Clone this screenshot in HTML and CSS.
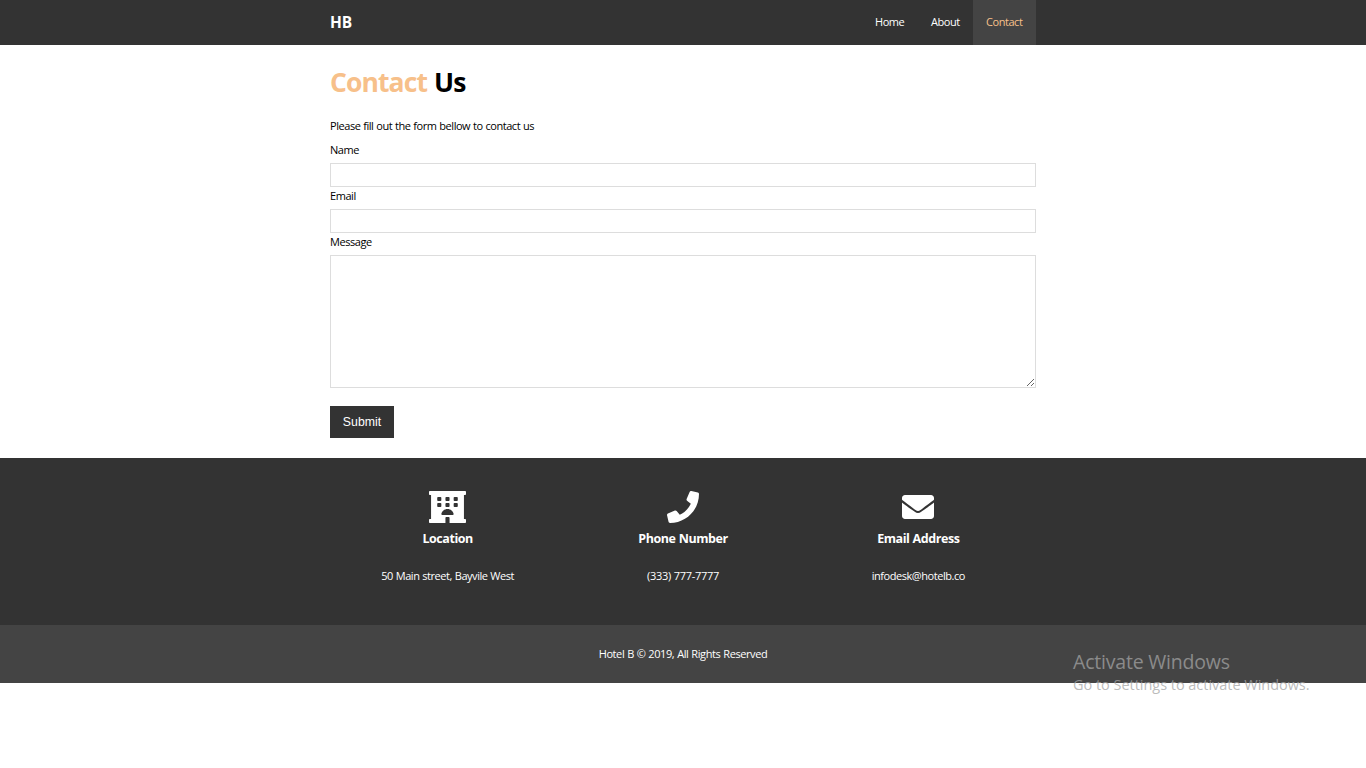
FILE: index.html
```html
<!DOCTYPE html>
<html lang="en">
<head>
<meta charset="utf-8">
<title>HB | Contact</title>
<link rel="stylesheet" href="styles.css">
</head>
<body>
<nav class="navbar">
  <div class="container nav-inner">
    <h1 class="logo">HB</h1>
    <ul class="menu">
      <li><a class="home" href="#">Home</a></li>
      <li><a class="about" href="#">About</a></li>
      <li><a class="current" href="#">Contact</a></li>
    </ul>
  </div>
</nav>
<section class="container contact">
  <h1 class="title"><span class="accent">Contact</span> Us</h1>
  <p class="intro">Please fill out the form bellow to contact us</p>
  <form>
    <div class="group"><label for="name">Name</label><input id="name" type="text"></div>
    <div class="group"><label for="email">Email</label><input id="email" type="text"></div>
    <div class="group"><label for="message">Message</label><textarea id="message"></textarea></div>
    <button class="btn" type="button">Submit</button>
  </form>
</section>
<section class="info">
  <div class="container columns">
    <div class="box">
      <svg class="hotel" viewBox="0 0 576 512" preserveAspectRatio="none"><path fill="currentColor" fill-rule="evenodd" d="M560 64c8.8 0 16-7.2 16-16V16c0-8.8-7.2-16-16-16H16C7.2 0 0 7.2 0 16v32c0 8.8 7.2 16 16 16h16v384H16c-8.8 0-16 7.2-16 16v32c0 8.8 7.2 16 16 16h240v-80c0-8.8 7.2-16 16-16h32c8.8 0 16 7.2 16 16v80h240c8.8 0 16-7.2 16-16v-32c0-8.8-7.2-16-16-16h-16V64zM141 96h38q13 0 13 13v38q0 13-13 13h-38q-13 0-13-13v-38q0-13 13-13zM269 96h38q13 0 13 13v38q0 13-13 13h-38q-13 0-13-13v-38q0-13 13-13zM397 96h38q13 0 13 13v38q0 13-13 13h-38q-13 0-13-13v-38q0-13 13-13zM141 192h38q13 0 13 13v38q0 13-13 13h-38q-13 0-13-13v-38q0-13 13-13zM269 192h38q13 0 13 13v38q0 13-13 13h-38q-13 0-13-13v-38q0-13 13-13zM397 192h38q13 0 13 13v38q0 13-13 13h-38q-13 0-13-13v-38q0-13 13-13zM208 384q-16 0-16-16c8-45 47-80 96-80s88 35 96 80q0 16-16 16z"/></svg>
      <h3>Location</h3>
      <p>50 Main street, Bayvile West</p>
    </div>
    <div class="box">
      <svg class="icon" viewBox="0 0 512 512"><path fill="currentColor" d="M493.4 24.6l-104-24c-11.3-2.6-22.9 3.3-27.5 13.9l-48 112c-4.2 9.8-1.4 21.3 6.9 28l60.6 49.6c-36 76.7-98.9 140.5-177.2 177.2l-49.6-60.6c-6.8-8.3-18.2-11.1-28-6.9l-112 48C3.9 366.5-2 378.1.6 389.4l24 104C27.1 504.2 36.7 512 48 512c256.1 0 464-207.5 464-464 0-11.2-7.7-20.9-18.6-23.4z"/></svg>
      <h3>Phone Number</h3>
      <p class="phone">(333) 777-7777</p>
    </div>
    <div class="box">
      <svg class="icon" viewBox="0 0 512 512"><path fill="currentColor" d="M502.3 190.8c3.9-3.1 9.7-.2 9.7 4.7V400c0 26.5-21.5 48-48 48H48c-26.5 0-48-21.5-48-48V195.6c0-5 5.7-7.8 9.7-4.7 22.4 17.4 52.1 39.5 154.1 113.6 21.1 15.4 56.7 47.8 92.2 47.6 35.7.3 72-32.8 92.3-47.6 102-74.1 131.6-96.3 154-113.7zM256 320c23.2.4 56.6-29.2 73.4-41.4 132.7-96.3 142.8-104.7 173.4-128.7 5.8-4.5 9.2-11.5 9.2-18.9v-19c0-26.5-21.5-48-48-48H48c-26.5 0-48 21.5-48 48v19c0 7.4 3.4 14.3 9.2 18.9 30.6 23.9 40.7 32.4 173.4 128.7 16.8 12.2 50.2 41.8 73.4 41.4z"/></svg>
      <h3>Email Address</h3>
      <p>infodesk@hotelb.co</p>
    </div>
  </div>
</section>
<footer class="footer"><p>Hotel B © 2019, All Rights Reserved</p></footer>
<aside class="activation">
  <div class="act-title">Activate Windows</div>
  <div class="act-text">Go to Settings to activate Windows.</div>
</aside>
</body>
</html>
```
FILE: styles.css
```css
* { box-sizing: border-box; margin: 0; padding: 0; }
body { background: #fff; color: #000; font: 11px/18px "Open Sans", "Noto Sans", sans-serif; letter-spacing: -0.45px; word-spacing: 0.4px; overflow: hidden; }
.container { width: 706px; margin: 0 auto; }
.navbar { height: 45px; background: #333; color: #fff; }
.nav-inner { display: flex; justify-content: space-between; }
.logo { font-size: 15.5px; line-height: 44px; letter-spacing: 0; }
.menu { display: flex; list-style: none; }
.menu a { display: block; height: 45px; line-height: 44px; padding-left: 13px; color: #fff; text-decoration: none; white-space: nowrap; }
.menu .home { width: 55px; }
.menu .about { width: 56px; padding-left: 14px; }
.menu .current { width: 63px; background: #444; color: #f7c08a; }
.contact { height: 413px; padding-top: 16px; }
.title { font-size: 26.5px; line-height: 43px; letter-spacing: -0.9px; word-spacing: 1px; }
.accent { color: #f7c08a; }
.intro { margin-top: 13px; }
form { padding-top: 6px; }
.group { height: 46px; }
.group:nth-child(3) { height: 173px; }
label { display: block; height: 22px; line-height: 18px; }
input { display: block; width: 100%; height: 24px; border: 1px solid #ddd; }
textarea { display: block; width: 100%; height: 133px; border: 1px solid #ddd; }
.btn { display: block; width: 64px; height: 32px; border: 0; background: #333; color: #fff; font: 12.3px "Liberation Sans", Arial, sans-serif; }
.info { height: 167px; padding-top: 33px; background: #333; color: #fff; }
.columns { display: grid; grid-template-columns: repeat(3, 1fr); text-align: center; }
.box svg { display: block; height: 32px; margin: 0 auto; }
.box .hotel { width: 37px; }
.icon { width: 32px; }
.box h3 { margin-top: 6px; font-size: 12.5px; line-height: 20px; letter-spacing: -0.45px; }
.box p { margin-top: 18px; }
.box .phone { letter-spacing: -0.3px; }
.footer { height: 58px; background: #444; color: #fff; line-height: 58px; text-align: center; letter-spacing: -0.4px; }
.activation { position: absolute; left: 1073px; top: 649px; white-space: nowrap; word-spacing: 0; color: #8b8b8b; }
.act-title { font-size: 19.5px; line-height: 26px; letter-spacing: -0.2px; }
.act-text { font-size: 14.5px; line-height: 20px; letter-spacing: -0.03px; color: rgba(165, 165, 165, .75); }
```
